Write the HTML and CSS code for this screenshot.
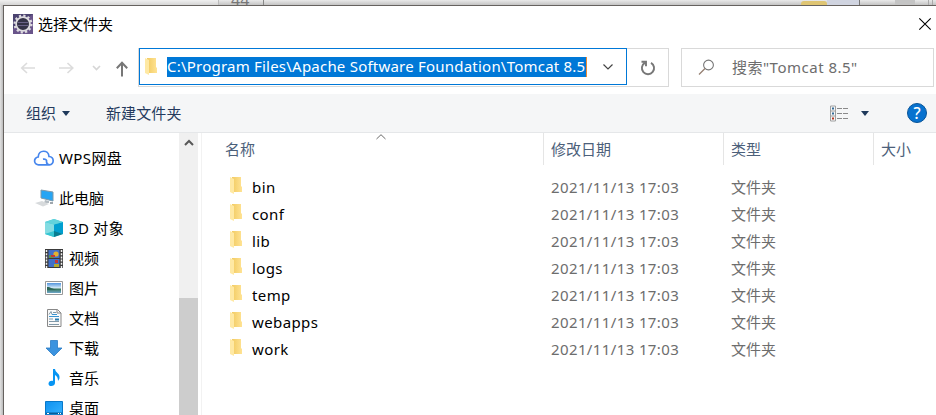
FILE: index.html
```
<!DOCTYPE html>
<html lang="zh-CN">
<head>
<meta charset="utf-8">
<title>选择文件夹</title>
<link rel="stylesheet" href="styles.css">
</head>
<body>
<svg class="defs" aria-hidden="true">
  <linearGradient id="gold"><stop offset="0" stop-color="#f2cb62"/><stop offset="1" stop-color="#ffe394"/></linearGradient>
  <linearGradient id="blue" x2="1" y2="1"><stop offset="0" stop-color="#0f91ef"/><stop offset="1" stop-color="#37b3ff"/></linearGradient>
  <linearGradient id="sky" x2="0" y2="1"><stop offset="0" stop-color="#5294dc"/><stop offset=".5" stop-color="#d8ecf8"/><stop offset=".6" stop-color="#367457"/><stop offset="1" stop-color="#70a8cc"/></linearGradient>
  <symbol id="folder" viewBox="0 0 12 17"><path d="M2 0h9v9l1 1v5H2z" fill="url(#gold)"/><path d="M0 0l4 2v15l-4-2z" fill="#ffe9a4"/></symbol>
</svg>
<div class="backdrop">
  <span class="gutter"></span><span class="line-no">44</span><span class="edge"></span><span class="tab"></span><span class="tab-mark"></span><span class="block"></span><span class="rail"></span>
</div>
<main class="window">
  <header class="title">
    <svg class="app" width="20" height="20" viewBox="0 0 20 20"><rect width="20" height="20" fill="#69548a"/><path d="M0 0h20L0 15z" fill="#4b4370"/><circle cx="10" cy="10" r="8.4" fill="none" stroke="#dedce0" stroke-width="2.2" stroke-dasharray="2.2 2.2"/><circle cx="10" cy="10" r="6.9" fill="#343247" stroke="#dedce0" stroke-width="1.8"/><path d="M5 8.500h10M5 11.500h10" stroke="#6a6288" stroke-width="1"/></svg>
    <h1>选择文件夹</h1>
    <svg class="close" width="12" height="12" viewBox="0 0 12 12"><path d="M.3.300l11.400 11.400M11.700.300L.3 11.700" stroke="#000" stroke-width="1.100"/></svg>
  </header>
  <nav class="nav">
    <svg class="arrows" width="134" height="40" viewBox="0 0 134 40" fill="none">
      <path d="M31 20H17.500m5.500-5-5.300 5 5.300 5M55 20h14m-5.500-5 5.300 5-5.300 5" stroke="#dcdcdc" stroke-width="1.600"/>
      <path d="M89 18l3.500 3.500L96 18" stroke="#d6d6d6" stroke-width="1.700"/>
      <path d="M118 28.500V14.500m-5.200 5.700 5.200-5.500 5.200 5.500" stroke="#777" stroke-width="2"/>
    </svg>
    <div class="location">
      <div class="address">
        <svg width="12" height="17"><use href="#folder"/></svg>
        <span class="path">C:\Program Files\Apache Software Foundation\Tomcat 8.5</span>
        <svg class="drop" width="12" height="8" viewBox="0 0 12 8"><path d="M1.500 1.500L6 6l4.500-4.500" fill="none" stroke="#444" stroke-width="1.200"/></svg>
      </div>
      <svg class="refresh" width="16" height="16" viewBox="0 0 16 16" fill="none" stroke="#777" stroke-width="1.900"><path d="M11 2.800A6.100 6.100 0 1 1 4.800 2.900M1.500 1.700H6v4.600"/></svg>
    </div>
    <div class="search">
      <svg width="17" height="17" viewBox="0 0 17 17" fill="none"><circle cx="10.500" cy="6" r="4.900" stroke="#777" stroke-width="1.100"/><path d="M7 9.500L1 15.500" stroke="#947e70" stroke-width="1.200"/></svg>
      <span>搜索"Tomcat 8.5"</span>
    </div>
  </nav>
  <section class="toolbar">
    <span>组织</span><i class="caret"></i><span class="new">新建文件夹</span>
    <svg class="view" width="18" height="17" viewBox="0 0 18 17" fill="none"><path d="M.5 1h5v15h-5zM.5 6h5M.5 11h5" stroke="#a0a0a0"/><path d="M7 3.500h5M13 3.500h5M7 8.500h5M13 8.500h5M7 13.500h5M13 13.500h5" stroke="#8a8a8a"/><path d="M2 3.500h2M2 8.500h2" stroke="#346c99" stroke-width="2"/><path d="M2 13.500h2" stroke="#b63822" stroke-width="2"/></svg>
    <i class="caret view-caret"></i><b class="help">?</b>
  </section>
  <section class="content">
    <aside>
      <ul class="tree">
        <li class="top cloud"><svg width="21" height="17" viewBox="0 0 21 17"><path d="M14 14.800H4.800A3.900 3.900 0 0 1 4.200 7C4.500-.6 14.500-.6 15 6.500c5.600.3 5.400 8.300.4 8.300-1.800-.2-2.900-1.700-2.900-3.300M9 9.200c2.600-.5 4 1 3.500 2.600" fill="none" stroke="#4686ed" stroke-width="1.700"/></svg><span>WPS网盘</span></li>
        <li class="top"><svg width="21" height="18" viewBox="0 0 21 18"><path d="M7 1l12 2v9L7 9z" fill="#26a5f4" stroke="#7d98aa"/><path d="M11 11l4 1v2h-5z" fill="#b4bcc2"/><path d="M1 14l7-2 7 3-6 2.500z" fill="#d7dadc"/><path d="M16 14h3" stroke="#a0a7ad" stroke-width="2"/></svg><span>此电脑</span></li>
        <li><svg width="18" height="18" viewBox="0 0 18 18"><path d="M0 3l9-3 9 3v12l-9 3-9-3z" fill="#45c9d6"/><path d="M0 3l9 2.500V13l-9 2z" fill="#83dce2"/><path d="M9 5.500l9-2.500v12l-9-2z" fill="#009fd0"/><path d="M0 15l9-3v6z" fill="#35c5d2"/><path d="M9 12l9 3-9 3z" fill="#087d91"/><path d="M0 3l9-3 9 3-9 2.500z" fill="#61d3dc"/></svg><span class="wide">3D 对象</span></li>
        <li><svg width="18" height="19" viewBox="0 0 18 19"><path d="M0 0h18v19H0z" fill="#3a3a3a"/><path d="M3.500 1h11v8h-11zM3.500 10h11v8h-11z" fill="#4170c9"/><path d="M1.500 1v18M16.500 1v18" stroke="#f2f2f2" stroke-width="1.500" stroke-dasharray="2 1.200"/><path d="M4 6h5v3H4z" fill="#5a9451"/><circle cx="11" cy="5" r="2.600" fill="#e4b230"/><path d="M6 6h4v2H6zM10 11h3v3h-3z" fill="#c63835"/><path d="M9 15h5v3H9z" fill="#b5aa2e"/></svg><span>视频</span></li>
        <li><svg width="18" height="14" viewBox="0 0 18 14"><path d="M.5.500h17v13H.5z" fill="#fff" stroke="#999"/><path d="M2 2h14v10H2z" fill="url(#sky)"/><path d="M2 6c4 0 5 2 10 3H2z" fill="#2d6657"/></svg><span>图片</span></li>
        <li><svg width="18" height="18" viewBox="0 0 18 18"><path d="M2.500.500h10l3.500 3.500v13.500H2.500z" fill="#fafafa" stroke="#888"/><path d="M12 .500V4h4" fill="none" stroke="#888"/><path d="M4 5.500l2-3 1 3M8 3.500h3M4 7.500h10M4 12.500h10M4 15.500h10M4 10h4" fill="none" stroke="#8098a8"/><path d="M4 7.500h10M7 5.500h5" stroke="#3a94d0"/><path d="M10 9.500h4v2h-4z" fill="#287bae"/></svg><span>文档</span></li>
        <li><svg width="18" height="17" viewBox="0 0 18 17"><path d="M5.500.500h7V8H17l-8 8-8-8h4.500z" fill="#3b93df" stroke="#2a7bc4" stroke-width=".8"/></svg><span>下载</span></li>
        <li><svg width="18" height="18" viewBox="0 0 18 18"><path d="M8 0h2c.5 4 5 4 4.500 9-.2 1.300-.8 2-1.500 3 0-3-1-5-3-6v8c0 4-7 4-6.500.500.3-2.500 3-3 4.500-2.500z" fill="#0795f3"/></svg><span>音乐</span></li>
        <li><svg width="18" height="15" viewBox="0 0 18 15"><path d="M.5.500h17v14H.5z" fill="url(#blue)" stroke="#0878c9"/><path d="M1 12.500h16" stroke="#075d9a" stroke-width="2"/><path d="M2 12.500h2m9 0h1m1 0h1" stroke="#fff"/></svg><span>桌面</span></li>
      </ul>
      <div class="scroll"><svg width="10" height="8" viewBox="0 0 10 8"><path d="M1 6l4-4 4 4" fill="none" stroke="#585858" stroke-width="2"/></svg><i></i></div>
    </aside>
    <div class="files">
      <svg class="sort" width="10" height="6" viewBox="0 0 10 6"><path d="M.5 5L5 .700 9.500 5" fill="none" stroke="#6a6a6a"/></svg>
      <div class="row head"><span>名称</span><span>修改日期</span><span>类型</span><span>大小</span></div>
      <div class="row first"><span class="name"><svg width="12" height="17"><use href="#folder"/></svg>bin</span><span class="date">2021/11/13 17:03</span><span>文件夹</span></div>
      <div class="row"><span class="name"><svg width="12" height="17"><use href="#folder"/></svg>conf</span><span class="date">2021/11/13 17:03</span><span>文件夹</span></div>
      <div class="row"><span class="name"><svg width="12" height="17"><use href="#folder"/></svg>lib</span><span class="date">2021/11/13 17:03</span><span>文件夹</span></div>
      <div class="row"><span class="name"><svg width="12" height="17"><use href="#folder"/></svg>logs</span><span class="date">2021/11/13 17:03</span><span>文件夹</span></div>
      <div class="row"><span class="name"><svg width="12" height="17"><use href="#folder"/></svg>temp</span><span class="date">2021/11/13 17:03</span><span>文件夹</span></div>
      <div class="row"><span class="name"><svg width="12" height="17"><use href="#folder"/></svg>webapps</span><span class="date">2021/11/13 17:03</span><span>文件夹</span></div>
      <div class="row"><span class="name"><svg width="12" height="17"><use href="#folder"/></svg>work</span><span class="date">2021/11/13 17:03</span><span>文件夹</span></div>
    </div>
  </section>
</main>
</body>
</html>
```
FILE: styles.css
```
* { box-sizing: border-box; }
body { margin: 0; width: 936px; height: 415px; overflow: hidden; background: linear-gradient(90deg, #e2e2e2, #bbb 3px); font: 15px/20px "Noto Sans", "Noto Sans CJK SC", sans-serif; color: #111; }
svg { display: block; flex: none; overflow: visible; }
.defs { position: absolute; width: 0; height: 0; }
.backdrop { height: 5px; display: flex; overflow: hidden; background: linear-gradient(#e9e9e9, #c4c4c4); }
.gutter { width: 219px; margin-right: 12px; border-left: 214px solid transparent; border-right: 1px solid #bbb; background: rgba(255,255,255,.3); }
.line-no { width: 32px; margin-top: -8px; line-height: 16px; font-size: 16px; color: #777; }
.edge { width: 1px; background: #888; margin-right: 537px; }
.tab { width: 26px; margin-top: 1px; border-radius: 3px 3px 0 0; background: #dfc573; }
.tab-mark { width: 33px; background: #d0d4e0; border-right: 1px solid #777; }
.block { width: 20px; margin-left: 35px; background: #c4c4c4; }
.rail { width: 5px; margin-left: 13px; border: solid #aaa; border-width: 0 1px; }
.window { width: 933px; height: 410px; margin-left: 3px; border: solid #66625f; border-width: 1px 0 0 1px; background: #fff; }
.title { height: 42px; display: flex; padding: 8px 5px 0 9px; }
.title h1 { margin: 0 0 0 5px; font-size: 15px; font-weight: 400; line-height: 20px; color: #000; }
.close { margin: 4px 0 0 auto; }
.nav { height: 39px; display: flex; }
.location { width: 531px; display: flex; border: 1px solid #d9d9d9; height: 39px; }
.address { width: 488px; height: 37px; margin: -1px 0 0; border: 1px solid #0078d7; display: flex; align-items: center; padding-left: 5px; }
.path { height: 20px; width: 420px; margin: 0 0 0 10px; line-height: 18px; letter-spacing: .22px; background: #0078d7; color: #fff; white-space: nowrap; border-right: 1px solid #ed8a32; }
.drop { margin-left: 15px; }
.refresh { margin: 11px 0 0 13px; }
.search { width: 253px; height: 39px; margin-left: 12px; padding: 0 0 0 16px; border: 1px solid #d9d9d9; display: flex; align-items: center; color: #6d6d6d; }
.search span { margin: -2px 0 0 17px; letter-spacing: .5px; }
.toolbar { height: 39px; margin-top: 7px; border-bottom: 1px solid #e5e7e9; background: #f5f6f7; display: flex; align-items: center; padding: 0 9px 0 22px; color: #243a5d; }
.caret { margin-left: 6px; border: solid transparent; border-width: 5px 4px 0; border-top-color: #1e395b; }
.new { margin-left: 36px; letter-spacing: .1px; }
.view { margin-left: auto; }
.view-caret { margin-left: 13px; }
.help { width: 20px; height: 20px; margin-left: 38px; border-radius: 50%; border: 1px solid #085498; background: #0872cf; color: #fff; text-align: center; font-size: 16px; line-height: 18px; font-weight: 500; }
.content { height: 282px; display: flex; }
aside { width: 198px; height: 282px; display: flex; border-right: 1px solid #f2f2f2; overflow: hidden; }
.tree { width: 175px; margin: 0; padding: 10px 0 0; list-style: none; color: #000; }
.tree li { height: 30px; display: flex; align-items: center; padding-left: 41px; }
.tree li.top { padding-left: 30px; }
.tree li.cloud { margin-bottom: 10px; }
.tree span { margin-left: 6px; white-space: nowrap; }
.tree .top span { margin-left: 4px; }
.tree .cloud span { letter-spacing: .4px; }
.tree .wide { letter-spacing: .3px; }
.scroll { width: 19px; background: #f0f0f0; display: flex; flex-direction: column; align-items: center; }
.scroll svg { margin-top: 6px; }
.scroll i { width: 19px; margin-top: 151px; flex: 1; background: #cdcdcd; }
.files { position: relative; flex: 1; }
.sort { position: absolute; left: 174px; top: 1px; }
.row { display: grid; grid-template-columns: 342px 180px 150px 1fr; height: 27px; align-items: center; color: #6d6d6d; }
.row > span { padding-left: 7px; white-space: nowrap; }
.row > span:first-child { padding-left: 23px; }
.head { height: 32px; color: #4c607a; }
.head span { height: 32px; line-height: 33px; border-right: 1px solid #e5e5e5; }
.head span:last-child { border: 0; }
.first { margin-top: 8px; }
.row > .name:first-child { display: flex; align-items: center; gap: 10px; padding-left: 28px; color: #000; letter-spacing: .4px; }
.name svg { margin-top: -2px; }
.date { letter-spacing: .38px; }
```
